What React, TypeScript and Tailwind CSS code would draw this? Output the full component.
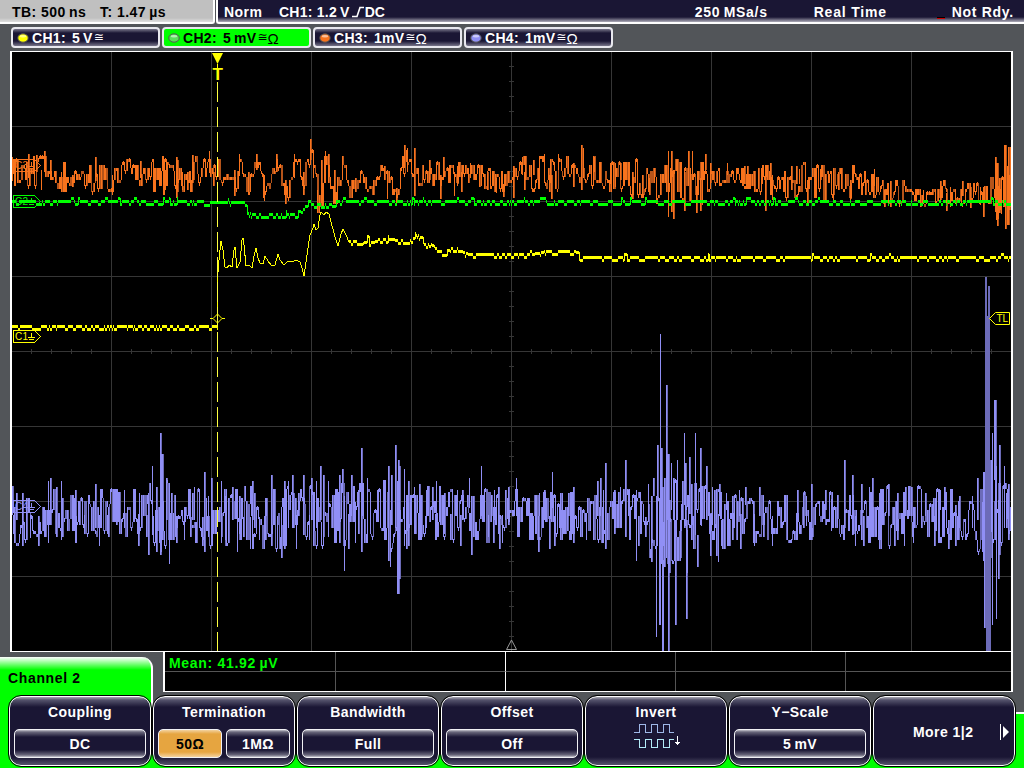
import React from 'react';

type Spike = [number, number | null, number | null];
type Key = [number, number, number]; // x, centre, amplitude

const X0 = 12;
const X1 = 1011;

// small deterministic generator so the traces stay the same between renders
const makeRandom = (seed: number) => () => {
  seed = (seed * 1664525 + 1013904223) >>> 0;
  return seed / 4294967296;
};

const lerpKeys = (keys: number[][], x: number, col: number) => {
  for (let i = 1; i < keys.length; i++) {
    if (x <= keys[i][0]) {
      const a = keys[i - 1];
      const b = keys[i];
      return a[col] + ((b[col] - a[col]) * (x - a[0])) / (b[0] - a[0]);
    }
  }
  return keys[keys.length - 1][col];
};

// noisy trace: zigzag of vertical bars, one or two columns wide, plus the spikes
const noisePaths = (seed: number, keys: Key[], spikes: Spike[]) => {
  const rnd = makeRandom(seed);
  let bright = '';
  let dim = '';
  let prev = keys[0][1];
  let side = 1;
  let x = X0;
  while (x < X1) {
    const centre = lerpKeys(keys, x, 1);
    const amp = lerpKeys(keys, x, 2);
    if (rnd() < 0.62) side = -side;
    const next = Math.round((centre + side * rnd() * amp * 1.15) / 3) * 3;
    const lo = Math.min(prev, next);
    const hi = Math.max(prev, next) + (prev === next ? 3 : 0);
    const shade = rnd();
    if (shade > 0.3) bright += `M${x}.5 ${lo}V${hi}`;
    else dim += `M${x}.5 ${lo}V${hi}`;
    x += 1;
    const step = rnd();
    if (step > 0.4) {
      if (step > 0.82) bright += `M${x}.5 ${lo}V${hi}`;
      else if (step > 0.62) dim += `M${x}.5 ${lo}V${hi}`;
      else bright += `M${x}.5 ${next - 1}V${next + 3}`;
      x += 1;
    }
    prev = next;
  }
  spikes.forEach(([sx, top, bottom], i) => {
    const c = lerpKeys(keys, sx, 1);
    const t = top ?? c;
    const b = bottom ?? c + 4;
    bright += `M${sx}.5 ${t}V${b}`;
    if (i % 3 !== 0) dim += `M${sx + 1}.5 ${t}V${b}`;
  });
  return { bright, dim };
};

// quiet trace: quantised to three pixel steps with occasional up/down codes
const levelPath = (seed: number, keys: number[][], up: number, down: number) => {
  const rnd = makeRandom(seed);
  let d = '';
  let prev = keys[0][1];
  let x = X0;
  while (x < X1) {
    let y = Math.round(lerpKeys(keys, x, 1));
    const r = rnd();
    if (r < up) y -= 3;
    else if (r > 1 - down) y += 3;
    if (Math.abs(y - prev) > 4) {
      d += `M${x}.5 ${Math.min(prev, y) + 1}V${Math.max(prev, y) + 2}`;
    }
    const run = Math.min(1 + Math.floor(rnd() * 3), X1 - x);
    for (let i = 0; i < run; i++) d += `M${x + i}.5 ${y}V${y + 3}`;
    prev = y;
    x += run;
  }
  return d;
};

const ch4Keys: Key[] = [
  [12, 515, 26], [60, 516, 24], [140, 514, 24], [160, 516, 34], [180, 516, 24], [210, 518, 30],
  [280, 516, 30], [330, 514, 28], [400, 515, 34], [420, 514, 26], [560, 516, 22], [640, 516, 26],
  [655, 520, 50], [690, 520, 36], [720, 518, 28], [760, 517, 22], [840, 516, 20], [900, 516, 28],
  [975, 516, 22], [985, 520, 60], [1000, 515, 45], [1011, 510, 30],
];

const ch4Spikes: Spike[] = [
  [13, null, 534], [16, 493, 520], [22, 493, 546], [30, null, 538], [38, null, 546], [44, null, 537],
  [48, 481, 543], [50, 478, 525], [56, 487, 537], [61, 481, 540], [62, null, 537], [75, 490, 543],
  [76, null, 543], [84, null, 534], [95, 484, 528], [99, null, 546], [107, null, 534], [116, 493, 525],
  [124, 490, 528], [133, 493, 520], [138, null, 546], [139, 493, 528], [146, null, 537], [148, 493, 555],
  [152, 466, 535], [156, 487, 552], [160, 433, 555], [161, 454, 552], [162, 454, 540], [166, 478, 520],
  [169, 497, 564], [171, 493, 540], [176, null, 543], [184, null, 540], [190, null, 537], [192, 493, 520],
  [194, 487, 520], [202, null, 546], [204, 472, 552], [208, 496, 537], [211, 478, 546], [213, null, 528],
  [221, 481, 543], [225, 496, 540], [232, 487, 520], [237, null, 552], [239, 496, 534], [243, null, 537],
  [250, null, 549], [252, 481, 520], [254, 493, 528], [259, null, 540], [265, null, 540], [271, 475, 546],
  [277, null, 546], [281, 525, 558], [284, 481, 549], [288, 481, 528], [292, 475, 516], [293, 493, 520],
  [296, null, 549], [298, 493, 516], [303, 475, 535], [309, null, 540], [311, 478, 520], [313, null, 546],
  [316, 481, 528], [320, 466, 520], [323, 475, 537], [328, 481, 537], [339, 475, 543], [342, 469, 493],
  [344, 496, 571], [348, null, 549], [351, 475, 516], [355, 502, 543], [358, 490, 534], [361, 448, 552],
  [367, 478, 543], [377, 490, 520], [388, 466, 561], [390, 514, 567], [391, 475, 525], [395, 445, 528],
  [397, 481, 594], [398, 460, 594], [399, 466, 579], [404, 469, 546], [406, 505, 549], [408, 481, 546],
  [414, 487, 528], [419, 484, 540], [421, null, 537], [426, 490, 528], [432, 487, 520], [435, null, 540],
  [436, 481, 540], [444, 493, 534], [450, null, 540], [457, 490, 520], [460, null, 546], [462, 490, 520],
  [469, 478, 508], [471, 496, 555], [473, 496, 537], [481, 466, 516], [488, null, 537], [493, null, 543],
  [494, 490, 520], [498, 487, 528], [499, null, 549], [502, null, 543], [505, 490, 520], [508, 487, 525],
  [516, 478, 516], [518, null, 534], [538, null, 552], [539, 493, 516], [544, 490, 520], [549, null, 549],
  [552, 472, 508], [554, null, 546], [560, 493, 540], [562, 493, 540], [568, 493, 516], [573, 487, 543],
  [586, null, 540], [597, 481, 516], [600, 478, 516], [603, 490, 540], [605, 463, 549], [614, 490, 534],
  [620, 487, 520], [625, 460, 537], [628, 490, 516], [636, 490, 561], [638, null, 546], [645, null, 537],
  [648, 484, 516], [651, 496, 562], [653, 478, 496], [656, 496, 637], [657, 445, 500], [659, 500, 625],
  [660, 334, 625], [661, 448, 564], [662, 487, 651], [663, 560, 651], [664, 478, 567], [666, 385, 558],
  [667, 454, 520], [668, 454, 651], [669, 500, 573], [671, 463, 510], [673, 478, 520], [675, 520, 625],
  [677, 460, 520], [680, 520, 558], [682, 481, 520], [684, 433, 505], [685, 463, 526], [686, 520, 619],
  [687, 530, 573], [689, 457, 514], [691, 484, 540], [695, 433, 535], [697, 535, 567], [700, 448, 490],
  [701, 490, 526], [706, 466, 520], [710, 514, 556], [712, 487, 525], [714, 490, 528], [716, 492, 556],
  [718, 514, 562], [719, 484, 516], [721, 520, 546], [726, 493, 510], [729, 520, 546], [732, 496, 540],
  [739, 490, 516], [740, 514, 549], [745, 487, 505], [754, 514, 546], [759, 487, 516], [763, 516, 537],
  [772, 516, 546], [797, 490, 520], [803, 493, 528], [806, 496, 526], [811, 484, 540], [825, 490, 510],
  [831, 499, 531], [844, 460, 528], [852, 475, 535], [855, 516, 546], [861, 484, 540], [863, 516, 546],
  [869, 487, 520], [872, 478, 510], [879, 493, 549], [881, 499, 549], [888, 484, 516], [897, 493, 540],
  [904, 496, 546], [905, 487, 516], [911, 487, 516], [913, 516, 543], [925, 493, 516], [934, 516, 546],
  [940, 490, 510], [944, 487, 510], [948, 520, 549], [951, 490, 530], [955, 505, 546], [959, 496, 528],
  [972, 496, 528], [977, 478, 520], [982, 502, 552], [983, 472, 552], [984, 472, 628], [991, 460, 532],
  [992, 433, 625], [994, 400, 480], [995, 400, 540], [996, 466, 619], [998, 500, 579], [999, 445, 555],
  [1004, 466, 528], [1006, 493, 528], [1008, 484, 540],
];

const ch3Keys: Key[] = [
  [12, 174, 14], [40, 170, 14], [60, 178, 13], [100, 178, 13], [113, 181, 12], [125, 170, 12],
  [160, 174, 18], [185, 178, 18], [200, 170, 11], [213, 173, 10], [217, 164, 9], [222, 180, 9],
  [227, 171, 9], [234, 188, 9], [239, 156, 9], [243, 178, 8], [248, 188, 8], [253, 166, 8],
  [257, 157, 8], [261, 178, 8], [264, 196, 7], [268, 180, 9], [272, 174, 9], [276, 160, 9],
  [280, 178, 8], [285, 197, 8], [290, 175, 9], [294, 155, 9], [299, 170, 10], [302, 187, 8],
  [306, 165, 9], [311, 146, 9], [314, 160, 9], [317, 206, 7], [320, 200, 7], [323, 160, 10],
  [328, 166, 14], [334, 198, 10], [338, 182, 9], [342, 163, 7], [346, 175, 6], [349, 190, 9],
  [355, 185, 8], [363, 178, 7], [369, 190, 8], [375, 185, 7], [379, 170, 8], [385, 172, 12],
  [390, 185, 9], [396, 196, 7], [402, 165, 9], [408, 158, 14], [416, 178, 9], [430, 175, 12],
  [470, 174, 13], [500, 184, 12], [515, 174, 15], [560, 172, 18], [600, 172, 17], [650, 182, 17],
  [670, 182, 26], [700, 180, 19], [715, 175, 9], [740, 178, 12], [800, 180, 18], [850, 182, 16],
  [870, 184, 10], [885, 194, 12], [905, 190, 11], [920, 196, 10], [940, 190, 13], [980, 196, 11],
  [993, 192, 18], [996, 188, 36], [1011, 188, 36],
];

const ch3Spikes: Spike[] = [
  [12, 157, 181], [28, 154, 178], [36, 155, 172], [41, 170, 190], [44, 151, 172], [50, 160, 180],
  [61, 172, 192], [72, 175, 187], [95, 157, 181], [112, 175, 195], [140, 161, 178], [163, 172, 192],
  [165, 170, 190], [176, 157, 198], [177, 160, 192], [182, 172, 190], [187, 172, 190], [192, 155, 183],
  [209, 151, 173], [213, 172, 186], [234, 170, 196], [239, 154, 176], [248, 172, 193], [256, 154, 170],
  [264, 175, 201], [276, 154, 172], [285, 180, 204], [294, 154, 178], [303, 172, 195], [310, 139, 160],
  [313, 154, 178], [317, 190, 213], [321, 160, 203], [325, 151, 170], [328, 154, 183], [334, 170, 203],
  [337, 190, 204], [355, 178, 192], [384, 166, 180], [387, 170, 199], [396, 188, 203], [404, 145, 168],
  [407, 148, 172], [414, 148, 196], [429, 160, 180], [436, 163, 178], [440, 175, 199], [443, 157, 172],
  [454, 172, 196], [457, 166, 184], [461, 172, 192], [470, 163, 178], [479, 172, 187], [487, 172, 190],
  [496, 178, 193], [503, 184, 197], [513, 166, 198], [522, 157, 175], [524, 172, 190], [533, 160, 175],
  [544, 154, 172], [549, 175, 192], [551, 175, 199], [558, 154, 170], [573, 163, 187], [581, 145, 190],
  [583, 148, 178], [594, 157, 172], [610, 163, 184], [615, 163, 187], [620, 163, 180], [632, 172, 199],
  [637, 163, 184], [642, 175, 195], [649, 178, 195], [668, 151, 217], [671, 151, 212], [673, 170, 219],
  [680, 163, 186], [684, 172, 211], [688, 151, 186], [692, 151, 178], [696, 186, 213], [700, 178, 211],
  [702, 178, 205], [705, 154, 170], [710, 163, 183], [727, 163, 175], [744, 166, 184], [747, 166, 184],
  [762, 166, 184], [765, 175, 211], [770, 163, 180], [772, 175, 200], [791, 166, 190], [796, 166, 184],
  [799, 169, 184], [807, 180, 204], [820, 169, 180], [833, 172, 200], [838, 172, 190], [850, 180, 199],
  [874, 169, 186], [884, 190, 207], [890, 181, 207], [923, 190, 204], [940, 181, 200], [946, 193, 211],
  [950, 187, 207], [962, 181, 196], [970, 187, 208], [980, 187, 205], [983, 187, 217], [995, 157, 212],
  [996, 163, 220], [997, 163, 226], [999, 178, 213], [1001, 178, 214], [1004, 145, 200], [1005, 145, 229],
  [1007, 166, 211], [1009, 175, 210],
];

const ch2Keys = [
  [12, 200], [60, 200], [160, 200], [244, 201], [248, 212], [254, 213], [300, 213], [303, 208],
  [306, 203], [330, 203], [336, 200], [X1, 200],
];

const ch1Start = [[12, 325], [X1, 325]];

const ch1Points =
  '217,330 217,283 218,272 219,260 221,241 223,250 225,267 227,268 229,265 232,267 234,250 235,247 237,268 240,262 242,240 243,238 244,245 246,266 249,265 252,268 254,256 256,248 258,258 260,263 263,264 265,256 268,261 271,265 275,265 278,254 280,260 284,265 288,261 292,262 296,260 300,262 302,268 304,276 306,262 308,248 310,235 313,228 314,224 316,230 318,228 320,215 321,212 324,215 326,212 329,214 331,222 334,233 336,240 338,246 341,234 343,229 346,235 349,242';

const ch1Tail = [
  [349, 240], [362, 240], [364, 238], [367, 238], [369, 241], [374, 241], [376, 238], [410, 239], [414, 236],
  [417, 233], [420, 236], [425, 245], [427, 247], [431, 243], [434, 245], [437, 250], [445, 251], [449, 247],
  [458, 247], [462, 251], [468, 253], [494, 253], [500, 253], [530, 253], [545, 250], [575, 250], [580, 256],
  [X1, 256],
];

const onlyColumns = (d: string, keep: (x: number) => boolean) =>
  d
    .split('M')
    .filter((s) => s && keep(parseFloat(s)))
    .map((s) => 'M' + s)
    .join('');

const ch4 = noisePaths(41, ch4Keys, ch4Spikes);
const ch3 = noisePaths(7, ch3Keys, ch3Spikes);
const ch2 = levelPath(23, ch2Keys, 0.06, 0.36);
const ch1Left = onlyColumns(levelPath(5, ch1Start, 0, 0.45), (x) => x < 217);
const ch1Right = onlyColumns(levelPath(11, ch1Tail, 0.03, 0.3), (x) => x > 349);

const gridX = [111, 211, 311, 411, 511, 611, 711, 811, 911];
const gridY = [126, 201, 276, 351, 426, 501, 576];

const GroundTag: React.FC<{ y: number; color: string; label: string; fill?: string }> = ({ y, color, label, fill = 'none' }) => (
  <g shapeRendering="crispEdges">
    <path d={`M13.5 ${y - 5.5}H34.5L40.5 ${y + 0.5}L34.5 ${y + 6.5}H13.5Z`} stroke={color} fill={fill} />
    <text x="15" y={y + 4} fontSize="10" letterSpacing="0.3" fontWeight="400" fill={color}>
      {label}
    </text>
    <path d={`M31.5 ${y - 3}V${y + 2}M28 ${y + 1.5}H35M29 ${y + 3.5}H34`} stroke={color} />
  </g>
);

const Waveforms: React.FC = () => (
  <svg width="999" height="599" viewBox="12 52 999 599" className="block">
    <g shapeRendering="crispEdges" stroke="#363636" fill="none">
      {gridX.map((x) => <path key={x} d={`M${x}.5 52V651`} />)}
      {gridY.map((y) => <path key={y} d={`M12 ${y}.5H1011`} />)}
      {Array.from({ length: 49 }, (_, i) => 31 + i * 20).map((x) => <path key={x} d={`M${x}.5 349V354`} />)}
      {Array.from({ length: 39 }, (_, i) => 66 + i * 15).map((y) => <path key={y} d={`M509 ${y}.5H514`} />)}
    </g>

    <g shapeRendering="crispEdges" fill="none">
      <path d={ch4.dim} stroke="#6c6bb8" />
      <path d={ch4.bright} stroke="#908ff5" />
      <path d="M985.5 277V628M986.5 277V651" stroke="#6c6bb8" />
      <path d="M987.5 316V651M988.5 286V651M990.5 460V651" stroke="#6c6bb8" />
      <path d="M989.5 286V651" stroke="#6c6bb8" />
      <path d={ch3.dim} stroke="#b5541a" />
      <path d={ch3.bright} stroke="#f8731d" />
      <path d={ch2} stroke="#00ff00" />
      <path d={ch1Left} stroke="#ffff00" />
      <path d={ch1Right} stroke="#ffff00" />
      <polyline points={ch1Points} stroke="#ffff00" strokeWidth="1" />
    </g>

    <GroundTag y={165} color="#f8731d" label="C3" />
    <GroundTag y={201} color="#00ff00" label="C2" />
    <GroundTag y={336} color="#ffff00" label="C1" fill="#000" />
    <GroundTag y={506} color="#908ff5" label="C4" />

    {/* trigger cursor */}
    <path d="M217.5 82V651" stroke="#ffff40" strokeDasharray="20 5" shapeRendering="crispEdges" />
    <path d="M212 53H223L217.5 64Z" fill="#ffff00" />
    <text x="217.7" y="80" textAnchor="middle" fontSize="17" fontWeight="700" letterSpacing="0" fill="#ffff00">
      T
    </text>
    <path d="M217.5 64V69" stroke="#ffff00" shapeRendering="crispEdges" />
    <path d="M210 318.5H213L217.5 314L222 318.5L217.5 323L213 318.5M222 318.5H225" stroke="#ffff00" fill="none" />

    <path d="M989.5 318.5L995.5 312.5H1009.5V324.5H995.5Z" fill="#000" stroke="#ffff00" />
    <text x="996.5" y="322" fontSize="10" fontWeight="400" letterSpacing="0" fill="#ffff00">TL</text>

    <path d="M506.5 649.5H516.5L511.5 640Z" fill="none" stroke="#999" />
  </svg>
);

const Led: React.FC<{ fill: string }> = ({ fill }) => (
  <svg width="12" height="10" viewBox="0 0 12 10" className="mr-[3px] shrink-0">
    <ellipse cx="6" cy="5" rx="5.2" ry="4.2" fill={fill} stroke="#555" />
    <ellipse cx="6" cy="3.2" rx="3.2" ry="1.2" fill="#fff" opacity="0.55" />
  </svg>
);

const channels = [
  { name: 'CH1:', value: '5\u2009V', ohm: false, fill: '#ffff00', active: false },
  { name: 'CH2:', value: '5\u2009mV', ohm: true, fill: '#5be05b', active: true },
  { name: 'CH3:', value: '1mV', ohm: true, fill: '#f8731d', active: false },
  { name: 'CH4:', value: '1mV', ohm: true, fill: '#908ff5', active: false },
];

const ChannelChip: React.FC<{ ch: (typeof channels)[number] }> = ({ ch }) => (
  <div
    className={`flex h-[21px] w-[149px] items-center rounded-[4px] border-2 border-[#e8e8ee] pl-[4px] leading-[17px] ${
      ch.active
        ? 'bg-[#00ff00] text-black'
        : 'bg-[linear-gradient(#77758a_0,#1a1634_4px,#1a1634_12px,#77758a_17px)] text-white'
    }`}
  >
    <Led fill={ch.fill} />
    <span className="mt-px mr-[6px] tracking-[0.3px]">{ch.name}</span>
    <span className="mt-px tracking-[0.3px]">{ch.value}</span>
    <span className="ml-px font-['DejaVu_Sans',sans-serif] text-[12px] font-normal tracking-normal">≅</span>
    {ch.ohm && <span className="mt-px font-['Liberation_Sans',sans-serif] text-[15px] font-normal tracking-normal">Ω</span>}
  </div>
);

const keyFace = 'bg-[linear-gradient(#c4c3cc_0,#6a687c_2px,#1a1634_7px,#1a1634_20px,#6a687c_25px,#c4c3cc_27px)]';

const Value: React.FC<{ children: React.ReactNode; selected?: boolean }> = ({ children, selected }) => (
  <div
    className={`flex h-[29px] w-full items-center justify-center rounded-[5px] border border-[#f0f0f4] pt-px ${
      selected ? 'bg-[linear-gradient(#f3d29f_0,#e6a540_4px,#e6a540_22px,#f3d29f_27px)] text-black' : `${keyFace} text-white`
    }`}
  >
    {children}
  </div>
);

const SoftKey: React.FC<{ title?: string; children: React.ReactNode }> = ({ title, children }) => (
  <div className="flex h-[70px] w-[142px] flex-col rounded-[12px] border border-white bg-[linear-gradient(#a9a8b4_0,#55536c_3px,#1a1634_10px,#1a1634_60px,#55536c_68px)] px-[4px] text-white outline-1 outline-black">
    {title && <div className="mt-[5px] mb-[7px] h-5 text-center leading-5">{title}</div>}
    {children}
  </div>
);

const App: React.FC = () => (
  <div className="flex h-[768px] w-[1024px] flex-col overflow-hidden bg-[#525559] font-['Liberation_Sans',Arial,sans-serif] text-[14px] font-bold tracking-[0.45px]">
    <header className="flex h-6 shrink-0 gap-px whitespace-nowrap">
      <div className="flex w-[215px] rounded-br-[3px] border-r-2 border-b-2 border-white bg-[linear-gradient(#c0c0c0_0,#c0c0c0_18px,#e0e0e0_22px)] pl-3 leading-6 text-black">
        <span className="w-[88px]">TB: 500{'\u2009'}ns</span>
        <span>T: 1.47{'\u2009'}µs</span>
      </div>
      <div className="flex flex-1 rounded-bl-[3px] border-b-2 border-l-2 border-white bg-[linear-gradient(#1a1634_0,#1a1634_17px,#b0aebb_22px)] pl-[6px] leading-6 text-white">
        <span className="w-[55px]">Norm</span>
        <span className="tracking-[0.25px]">CH1: 1.2{'\u2009'}V</span>
        <svg width="12" height="24" viewBox="0 0 12 24" className="mr-px ml-[2px]">
          <path d="M0 16.5H5L8 7.5H12" stroke="#fff" strokeWidth="1.6" fill="none" />
        </svg>
        <span className="w-[330px] tracking-normal">DC</span>
        <span className="w-[119px] tracking-[0.7px]">250{'\u2009'}MSa/s</span>
        <span className="w-[123px] tracking-[0.8px]">Real Time</span>
        <span className="mt-[17px] mr-[7px] h-[2px] w-[8px] border-b border-[#d00000] bg-black" />
        <span className="tracking-[0.7px]">Not Rdy.</span>
      </div>
    </header>

    <div className="mt-[3px] flex h-6 shrink-0 gap-[2px] pl-[11px]">
      {channels.map((ch) => <ChannelChip key={ch.name} ch={ch} />)}
    </div>

    <main className="ml-[10px] h-[601px] w-[1003px] shrink-0 border-x-2 border-y border-white bg-black">
      <Waveforms />
    </main>

    <footer className="flex flex-1 flex-col bg-[linear-gradient(#525559_0,#525559_60px,#ffffff_60px,#ffffff_62px,#00ff00_62px)]">
      <div className="flex h-[40px] shrink-0">
        <div className="mt-[5px] h-[60px] w-[153px] rounded-tr-[11px] border-r-2 border-white bg-[linear-gradient(#ffffff_0,#c8ffc8_3px,#00ff00_13px)] pt-[11px] pl-2 leading-5 tracking-[0.65px] text-black">
          Channel 2
        </div>
        <div className="ml-[10px] grid h-[40px] w-[850px] grid-cols-[171px_170px_170px_170px_1fr] grid-rows-[20px_1fr] border-x-2 border-b border-white bg-black">
          {Array.from({ length: 10 }, (_, i) => (
            <div
              key={i}
              className={`whitespace-nowrap ${i % 5 < 4 ? 'border-r' : ''} ${i < 5 ? 'border-b' : ''} ${
                i % 5 === 1 ? 'border-r-white border-b-[#555]' : 'border-[#555]'
              } pl-1 leading-[22px] tracking-[0.7px] text-[#00ff00]`}
            >
              {i === 0 && <>Mean: 41.92{'\u2009'}µV</>}
            </div>
          ))}
        </div>
      </div>

      <div className="relative mt-[4px] flex gap-[2px] pl-[9px]">
        <SoftKey title="Coupling"><Value>DC</Value></SoftKey>
        <SoftKey title="Termination">
          <div className="flex gap-1">
            <Value selected>50Ω</Value>
            <Value>1MΩ</Value>
          </div>
        </SoftKey>
        <SoftKey title="Bandwidth"><Value>Full</Value></SoftKey>
        <SoftKey title="Offset"><Value>Off</Value></SoftKey>
        <SoftKey title="Invert">
          <svg width="50" height="28" viewBox="633 722 50 28" fill="none" shapeRendering="crispEdges" className="-mt-[7px] ml-[43px]">
            <path d="M634 732.5H639.5V724.5H645.5V732.5H651.5V724.5H657.5V732.5H663.5V724.5H669.5V732.5H674" stroke="#9fb8e8" />
            <path d="M634 739.5H639.5V747.5H645.5V739.5H651.5V747.5H657.5V739.5H663.5V747.5H669.5V739.5H674" stroke="#b4ecf8" />
            <path d="M677.5 736V745M675 742.5H680M676 743.5H679" stroke="#fff" />
          </svg>
        </SoftKey>
        <SoftKey title="Y−Scale"><Value>5{'\u2009'}mV</Value></SoftKey>
        <SoftKey>
          <div className="flex h-full items-center pt-[2px] pl-[35px]">
            <span className="w-[87px] whitespace-nowrap">More 1|2</span>
            <svg width="10" height="16" viewBox="0 0 10 16" className="shrink-0">
              <path d="M0.5 0V16" stroke="#fff" />
              <path d="M3 2L9 8L3 14Z" fill="#fff" />
            </svg>
          </div>
        </SoftKey>
      </div>
    </footer>
  </div>
);

export default App;
